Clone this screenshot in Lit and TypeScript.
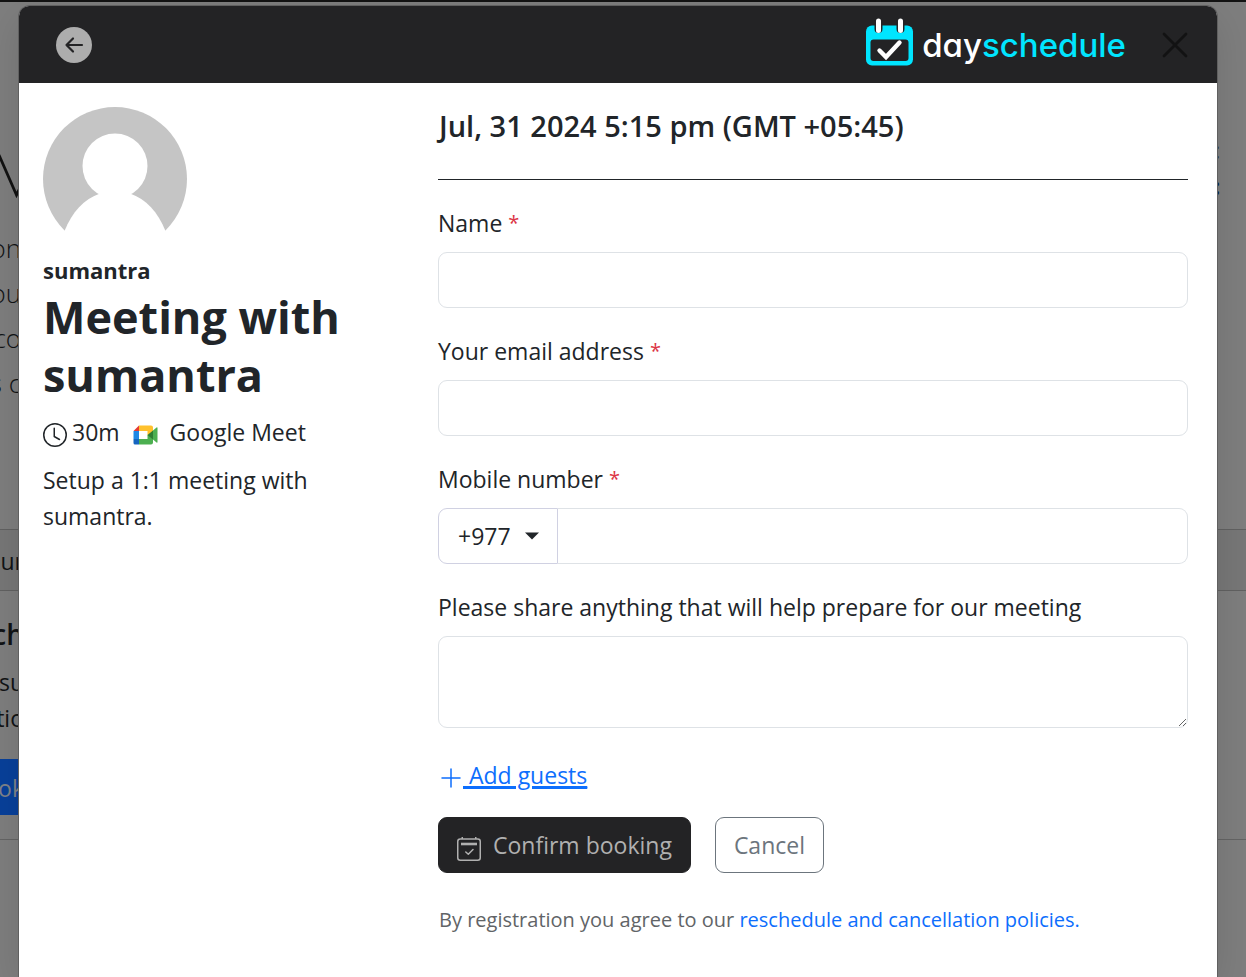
import { LitElement, html, css, svg, nothing } from "lit";
import { customElement, property } from "lit/decorators.js";

const arrowLeft = svg`<path d="M10.500 18H26M17 11.500L10.500 18L17 24.500" fill="none" stroke="#232325" stroke-width="2.200" stroke-linecap="round" stroke-linejoin="round"/>`;

/** The dimmed page that stays visible around the dialog. */
@customElement("page-behind")
export class PageBehind extends LitElement {
  static styles = css`
    :host {
      display: grid;
      grid-template-rows: 2px 527px 62px minmax(0, 248px) 1px minmax(0, 1fr);
      overflow: hidden;
      background: #7e7e7e;
      color: #111315;
      font-family: "Open Sans", "Noto Sans", sans-serif;
      font-size: 23px;
      line-height: 36px;
    }
    .bar { background: #131313; }
    .hero { display: flex; justify-content: space-between; }
    .edge {
      box-sizing: border-box;
      display: flex;
      flex-direction: column;
      align-items: flex-end;
      width: 24px;
      white-space: nowrap;
    }
    .intro { width: 21px; padding-top: 126px; font-size: 26px; line-height: 45px; font-weight: 300; }
    .intro svg { flex: none; width: 21px; height: 98px; }
    .aside { padding: 130px 26px 0 0; text-align: right; color: #2c2e30; font-weight: 600; }
    .aside b { display: block; color: #0a2048; }
    .tab {
      box-sizing: border-box;
      background: #777777;
      border: solid #616161;
      border-width: 1px 0;
    }
    .tab .edge { padding-top: 13px; }
    .card { padding-top: 25px; }
    .card b { font-size: 28px; font-weight: 600; margin-bottom: 12px; }
    .book {
      box-sizing: border-box;
      width: 24px;
      height: 56px;
      margin-top: 23px;
      padding-top: 11px;
      background: #08409a;
      color: #7f8389;
      display: flex;
      justify-content: flex-end;
    }
    .line { background: #646464; }
  `;
  render() {
    return html`
      <div class="bar"></div>
      <div class="hero">
        <div class="edge intro">
          <svg viewBox="0 0 21 98" aria-hidden="true">
            <path d="M-1 27L16.500 67L21 58" fill="none" stroke="#121212" stroke-width="2.800" />
          </svg>
          <span>on</span><span>ou</span><span>co</span><span>s c</span>
        </div>
        <div class="aside">:<b>:</b></div>
      </div>
      <div class="tab"><div class="edge">our</div></div>
      <div class="edge card">
        <b>ch</b><span>su</span><span>tio</span>
        <span class="book">ok</span>
      </div>
      <div class="line"></div>
      <div></div>
    `;
  }
}

@customElement("form-field")
export class FormField extends LitElement {
  @property() label = "";
  @property() kind = "text";
  @property({ type: Boolean }) required = false;

  static styles = css`
    :host { display: block; margin-bottom: 25px; }
    label { display: block; margin-bottom: 11px; line-height: 36px; }
    .star { color: #dc3545; font-size: 20px; line-height: 0; vertical-align: 2px; }
    .row { display: flex; }
    input, textarea, select {
      box-sizing: border-box;
      height: 56px;
      margin: 0;
      padding: 9px 18px;
      border: 1px solid #dee2e6;
      border-radius: 9px;
      background: #fff;
      color: #212529;
      font: inherit;
      outline: none;
    }
    input, textarea { display: block; flex: 1; width: 100%; min-width: 0; }
    textarea { height: 92px; resize: vertical; }
    .code { display: grid; width: 120px; flex: none; }
    .code > * { grid-area: 1 / 1; }
    select {
      appearance: none;
      width: 100%;
      padding-left: 19px;
      border-color: #d0d1e2;
      border-radius: 9px 0 0 9px;
    }
    .caret {
      align-self: center;
      justify-self: end;
      width: 14px;
      height: 8px;
      margin-right: 19px;
      pointer-events: none;
    }
    .joined { border-left: 0; border-radius: 0 9px 9px 0; }
  `;

  private control() {
    if (this.kind === "textarea") return html`<textarea id="control"></textarea>`;
    if (this.kind === "tel")
      return html`<div class="row">
        <span class="code">
          <select aria-label="Country code"><option>+977</option></select>
          <svg class="caret" viewBox="0 0 14 8" aria-hidden="true"><path d="M0 .5H14L7 7.500Z" fill="#212529" /></svg>
        </span>
        <input class="joined" id="control" type="tel" />
      </div>`;
    return html`<input id="control" type=${this.kind} />`;
  }

  render() {
    return html`
      <label for="control">${this.label}${this.required ? html` <span class="star">*</span>` : nothing}</label>
      ${this.control()}
    `;
  }
}

@customElement("app-root")
export class AppRoot extends LitElement {
  static styles = css`
    :host {
      display: grid;
      grid-template: minmax(100vh, auto) / minmax(0, 1fr);
      overflow: hidden;
      color: #212529;
      font-family: "Open Sans", "Noto Sans", sans-serif;
      font-size: 23px;
      line-height: 36px;
    }
    page-behind, .modal { grid-area: 1 / 1; }
    page-behind { height: 100%; }
    .modal {
      z-index: 1;
      margin: 6px 29px 0 19px;
      border-radius: 11px 11px 0 0;
      background: #fff;
      box-shadow: 0 0 0 1px #606060, 0 12px 40px rgba(0, 0, 0, 0.12);
    }
    header {
      box-sizing: border-box;
      display: flex;
      align-items: center;
      height: 77px;
      padding: 0 28px 0 37px;
      border-radius: 10px 10px 0 0;
      background: #232325;
    }
    button { font: inherit; cursor: pointer; margin: 0; }
    .icon-button { display: block; padding: 0; border: 0; background: none; line-height: 0; }
    .back { width: 36px; height: 36px; border-radius: 50%; background: #adadad; }
    .logo {
      display: flex;
      align-items: center;
      gap: 8px;
      margin-left: auto;
      margin-right: 35px;
      color: #fff;
      font-family: Inter, "Open Sans", sans-serif;
      font-feature-settings: "cv11";
      font-size: 33px;
      font-weight: 500;
      line-height: 48px;
      text-decoration: none;
    }
    .logo svg { margin-bottom: 6px; }
    .logo em { color: #00e5ff; font-style: normal; }
    main {
      display: grid;
      grid-template-columns: minmax(0, 1fr) minmax(0, 2fr);
      gap: 20px;
      padding: 24px 29px 36px 24px;
    }
    .avatar { display: block; width: 144px; height: 144px; }
    .host { margin: 2px 0 0; font-size: 22px; line-height: 35px; font-weight: 700; }
    h1 { margin: 0 0 10px; font-size: 45px; line-height: 58px; font-weight: 700; }
    p { margin: 0; }
    .meta { display: flex; align-items: center; margin-bottom: 12px; }
    .meta svg { margin-top: 6px; }
    .meta .time { margin: 0 13px 0 5px; }
    .meta .place { margin-left: 12px; }
    .about { max-width: 300px; }
    h2 { margin: 1px 0 0; padding-left: 1px; font-size: 29px; line-height: 36px; font-weight: 600; }
    hr { margin: 35px 0 25px; border: 0; border-top: 1px solid #212529; }
    .guests { display: flex; width: fit-content; margin-top: 29px; color: #0d6efd; }
    .guests svg { margin: 11px 0 0 3px; }
    .guests span { white-space: pre; text-decoration: underline; text-decoration-thickness: 2px; text-underline-offset: 3px; }
    .actions { display: flex; gap: 24px; margin: 24px 0 30px; }
    .actions button {
      box-sizing: border-box;
      display: flex;
      align-items: center;
      gap: 12px;
      height: 56px;
      padding: 0 18px;
      border: 1px solid #232325;
      border-radius: 9px;
      white-space: nowrap;
    }
    .actions svg { margin-top: 8px; }
    .confirm { background: #232325; color: #b0b0b0; }
    .cancel { background: #fff; color: #6c757d; }
    .actions .cancel { border-color: #6c757d; }
    .terms { padding-left: 1px; font-size: 20px; line-height: 34px; color: #616467; }
    .terms a { color: #0d6efd; text-decoration: none; }
  `;

  render() {
    return html`
      <page-behind aria-hidden="true"></page-behind>
      <div class="modal" role="dialog" aria-label="Meeting with sumantra">
        <header>
          <button class="icon-button back" aria-label="Back">
            <svg width="36" height="36" viewBox="0 0 36 36">${arrowLeft}</svg>
          </button>
          <a class="logo" href="#" aria-label="dayschedule">
            <svg width="49" height="48" viewBox="0 0 49 48" aria-hidden="true">
              <rect x="1" y="7.500" width="47" height="40" rx="6" fill="#00e5ff" />
              <rect x="5.500" y="21.500" width="38" height="21.500" rx="3" fill="#232325" />
              <path d="M13.500 5V11M35.500 5V11" stroke="#232325" stroke-width="8" stroke-linecap="round" />
              <path d="M13.500 3V12.500M35.500 3V12.500" stroke="#fff" stroke-width="5" stroke-linecap="round" />
              <path d="M14.500 32.500L21 39L34.500 24.500" fill="none" stroke="#fff" stroke-width="4.400" stroke-linecap="round" />
            </svg>
            <span>day<em>schedule</em></span>
          </a>
          <button class="icon-button" aria-label="Close">
            <svg width="28" height="28" viewBox="0 0 28 28">
              <path d="M3 3L25 25M25 3L3 25" stroke="#121213" stroke-width="2.800" stroke-linecap="round" />
            </svg>
          </button>
        </header>
        <main>
          <section>
            <svg class="avatar" viewBox="0 0 144 144" role="img" aria-label="sumantra">
              <circle cx="72" cy="72" r="72" fill="#c5c5c5" />
              <circle cx="72" cy="59" r="32.500" fill="#fff" />
              <path d="M21.500 124C29 105 41 92 57 86.500H87C103 92 115 105 122.500 124V144H21.500Z" fill="#fff" />
            </svg>
            <p class="host">sumantra</p>
            <h1>Meeting with sumantra</h1>
            <div class="meta">
              <svg width="24" height="24" viewBox="0 0 16 16" fill="#212529" aria-hidden="true">
                <path d="M8 3.500a.5.5 0 0 0-1 0V9a.5.5 0 0 0 .252.434l3.500 2a.5.5 0 0 0 .496-.868L8 8.710z" />
                <path d="M8 16A8 8 0 1 0 8 0a8 8 0 0 0 0 16m7-8A7 7 0 1 1 1 8a7 7 0 0 1 14 0" />
              </svg>
              <span class="time">30m</span>
              <svg width="25" height="20" viewBox="0 0 25 20" aria-hidden="true">
                <path d="M.5 6L6 .5V6Z" fill="#e53935" />
                <path d="M6 .5H18Q20 .5 20 2.500V9L14.500 10V6H6Z" fill="#ffc12d" />
                <path d="M.5 6H6V14H.5Z" fill="#1e88e5" />
                <path d="M.5 14H6V19.500H2Q.5 19.500 .5 18Z" fill="#1565c0" />
                <path d="M6 14H14.500V10L20 9V17.500Q20 19.500 18 19.500H6Z" fill="#4caf50" />
                <path d="M14.500 10L20 5.500V14.500Z" fill="#2e7d32" />
                <path d="M20 5.500L23.500 2.500Q24.500 2 24.500 3V17Q24.500 18 23.500 17.500L20 14.500Z" fill="#4caf50" />
              </svg>
              <span class="place">Google Meet</span>
            </div>
            <p class="about">Setup a 1:1 meeting with sumantra.</p>
          </section>
          <section>
            <h2>Jul, 31 2024 5:15 pm (GMT +05:45)</h2>
            <hr />
            <form @submit=${(e: Event) => e.preventDefault()}>
              <form-field label="Name" required></form-field>
              <form-field label="Your email address" kind="email" required></form-field>
              <form-field label="Mobile number" kind="tel" required></form-field>
              <form-field label="Please share anything that will help prepare for our meeting" kind="textarea"></form-field>
              <a class="guests" href="#">
                <svg width="22" height="22" viewBox="0 0 22 22" aria-hidden="true">
                  <path d="M10 1V19M1 10H19" stroke="#0d6efd" stroke-width="1.500" stroke-linecap="round" />
                </svg><span> Add guests</span>
              </a>
              <div class="actions">
                <button class="confirm" type="submit">
                  <svg width="24" height="24" viewBox="0 0 24 24" fill="none" stroke="#b0b0b0" stroke-width="1.500" aria-hidden="true">
                    <rect x=".75" y="2" width="22.500" height="21.250" rx="2.500" />
                    <path d="M5.250 0V2M18.750 0V2" />
                    <path d="M4 7H20" stroke-width="2.600" />
                    <path d="M8.800 15L11.300 17.300L16 12.500" stroke-linecap="round" stroke-linejoin="round" />
                  </svg>
                  Confirm booking
                </button>
                <button class="cancel" type="button">Cancel</button>
              </div>
              <p class="terms">
                By registration you agree to our <a href="#">reschedule and cancellation policies.</a>
              </p>
            </form>
          </section>
        </main>
      </div>
    `;
  }
}
